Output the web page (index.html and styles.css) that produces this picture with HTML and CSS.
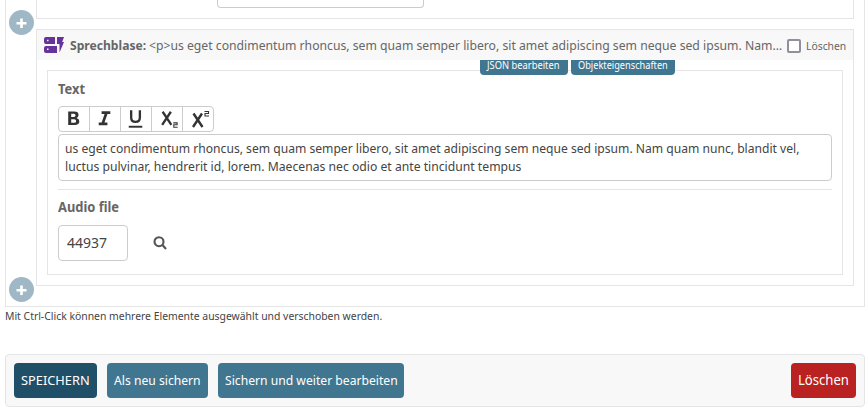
FILE: index.html
```html
<!DOCTYPE html>
<html lang="de">
<head>
<meta charset="utf-8">
<title>Sprechblase bearbeiten</title>
<link rel="stylesheet" href="styles.css">
</head>
<body>
<main class="page">
  <section class="group">
    <div class="item item-previous"><div class="previous-field"></div></div>
    <article class="item">
      <button class="add add-top" aria-label="+"><svg viewBox="0 0 25 25"><path d="M12.5 8.500v9.500M7.500 13.200h10"/></svg></button>
      <header class="item-header">
        <svg class="type-icon" viewBox="0 0 20 16"><path fill-rule="evenodd" d="M2 0H11V7H2Q0 7 0 5V2Q0 0 2 0ZM3 2.800v1.500h1.500v-1.500ZM2 9H13V16H2Q0 16 0 14V11Q0 9 2 9ZM3 11.500v1.500h1.500v-1.500ZM13 0H20L18.200 5H20L15.500 15.500V7H13Z"/></svg>
        <h3 class="item-title"><b class="narrow">Sprechblase:</b><span class="narrow">&lt;p&gt;us eget condimentum rhoncus, sem quam semper libero, sit amet adipiscing sem neque sed ipsum. Nam…</span></h3>
        <label class="remove"><i class="check"></i><span class="narrow">Löschen</span></label>
      </header>
      <nav class="tools"><a class="tool tool-json"><span class="narrow">JSON bearbeiten</span></a><a class="tool tool-object"><span class="narrow">Objekteigenschaften</span></a></nav>
      <div class="fields">
        <h4 class="label"><span class="narrow">Text</span></h4>
        <div class="toolbar">
          <svg viewBox="0 0 31 24"><path class="fill" fill-rule="evenodd" d="M9.500 4.200H15.700Q20.200 4.200 20.200 7.800Q20.200 10.100 18.200 10.900Q21 11.700 21 14.300Q21 18.200 16.200 18.200H9.500ZM12.600 6.500V9.900H15.400Q17.100 9.900 17.100 8.200Q17.100 6.500 15.400 6.500ZM12.600 12.200V15.900H15.600Q17.700 15.900 17.700 14Q17.700 12.200 15.600 12.200Z"/></svg>
          <svg viewBox="0 0 31 24"><path d="M12 5.400h9M9 17h9M17 5.500L13 17" class="thick"/></svg>
          <svg viewBox="0 0 31 24"><path d="M10.500 3v7.500Q10.500 15 15 15T19.500 10.500V3" class="mid"/><path d="M8 20h14"/></svg>
          <svg viewBox="0 0 31 24"><path class="mid" d="M11 4.500L20 18M19.500 4.500L10.500 18"/><path class="thin" d="M22 16h4v2h-3.500v2.500h4"/></svg>
          <svg viewBox="0 0 30 24"><path class="mid" d="M10.500 6.500L19.500 20M19 6.500L10 20"/><path class="thin" d="M21.500 4.500h4v2h-3.500v2.500h4"/></svg>
        </div>
        <div class="editor"><div><span class="narrow">us eget condimentum rhoncus, sem quam semper libero, sit amet adipiscing sem neque sed ipsum. Nam quam nunc, blandit vel,</span></div><div class="last"><span class="narrow">luctus pulvinar, hendrerit id, lorem. Maecenas nec odio et ante tincidunt tempus</span></div></div>
        <div class="audio">
          <h4 class="label"><span class="narrow">Audio file</span></h4>
          <div class="lookup"><div class="number">44937</div><svg viewBox="0 0 14 14"><circle cx="6" cy="5.700" r="4.500"/><path d="M9.500 9l3.500 4"/></svg></div>
        </div>
      </div>
      <button class="add add-bottom" aria-label="+"><svg viewBox="0 0 25 25"><path d="M12.5 8.500v9.500M7.500 13.200h10"/></svg></button>
    </article>
  </section>
  <p class="help"><span class="narrow">Mit Ctrl-Click können mehrere Elemente ausgewählt und verschoben werden.</span></p>
  <footer class="actions">
    <button class="btn save"><span class="narrow">SPEICHERN</span></button>
    <button class="btn copy"><span class="narrow">Als neu sichern</span></button>
    <button class="btn continue"><span class="narrow">Sichern und weiter bearbeiten</span></button>
    <button class="btn delete"><span class="narrow">Löschen</span></button>
  </footer>
</main>
</body>
</html>
```
FILE: styles.css
```css
* { box-sizing: border-box; }
body { margin: 0; background: #fff; color: #444; font: 13px/18px "Noto Sans", sans-serif; overflow: hidden; }
button { border: 0; font: inherit; padding: 0; }
h3, h4, p { margin: 0; }
.narrow { display: inline-block; transform: scaleX(.935); transform-origin: 0 50%; white-space: nowrap; }
.page { padding: 0 3px 0 5px; height: 412px; }
.group { width: 860px; height: 307px; border: 1px solid #e5e5e5; border-top: 0; padding: 0 10px 0 30px; }
.item { position: relative; border: 1px solid #e5e5e5; height: 257px; }
.item-previous { height: 19px; border-top: 0; margin-bottom: 10px; padding-left: 180px; }
.previous-field { width: 207px; height: 8px; border: 1px solid #ccc; border-top: 0; border-radius: 0 0 4px 4px; }
.add { position: absolute; left: -28px; width: 25px; height: 25px; border-radius: 50%; background: #a0b8c6; }
.add svg { display: block; width: 25px; height: 25px; fill: none; stroke: #fff; stroke-width: 2.6; }
.add-top { top: -20px; }
.add-bottom { bottom: -17px; }
.item-header { display: flex; align-items: center; height: 30px; background: #f8f8f8; padding: 0 7px; color: #666; }
.type-icon { flex: none; width: 20px; height: 16px; fill: #639; margin-right: 6px; }
.item-title { display: flex; flex: none; width: 717px; font-size: 13px; font-weight: 400; white-space: nowrap; }
.item-title b { flex: none; width: 79px; }
.item-title .narrow { transform: scaleX(.938); }
.item-title b.narrow { transform: scaleX(.932); }
.remove { display: flex; flex: none; width: 58px; align-items: center; gap: 5px; font-size: 11px; margin-top: 2px; }
.remove .narrow { transform: scaleX(.94); }
.check { flex: none; width: 14px; height: 14px; border: 2px solid #8f8f9d; border-radius: 2px; background: #fff; }
.tools { position: absolute; top: 30px; left: 443px; display: flex; gap: 3px; }
.tool { height: 15px; background: #417690; color: #fff; border-radius: 0 0 4px 4px; font-size: 10px; line-height: 11px; padding-left: 7px; white-space: nowrap; }
.tool-json { width: 88px; }
.tool-object { width: 104px; }
.tool-object .narrow { transform: scaleX(.92); }
.fields { margin: 10px; height: 205px; border: 1px solid #e5e5e5; padding: 9px 10px; }
.label { height: 18px; font-size: 14px; line-height: 18px; font-weight: 700; color: #666; }
.label .narrow { transform: scaleX(.92); }
.toolbar { display: flex; width: 156px; height: 26px; margin-top: 8px; border: 1px solid #ccc; border-radius: 4px; }
.toolbar svg { flex: none; width: 31px; height: 24px; border-right: 1px solid #ccc; fill: none; stroke: #333; stroke-width: 2; }
.toolbar svg:last-child { width: 30px; border: 0; }
.toolbar .fill { fill: #333; stroke: none; }
.toolbar .thick { stroke-width: 2.800; }
.toolbar .mid { stroke-width: 2.400; }
.toolbar .thin { stroke-width: 1.100; }
.editor { height: 47px; margin-top: 2px; border: 1px solid #ccc; border-radius: 4px; padding: 4px 6px; white-space: nowrap; }
.editor > div { height: 18px; }
.editor .narrow { transform: scaleX(.932); }
.editor .last .narrow { transform: scaleX(.937); }
.audio { margin-top: 8px; border-top: 1px solid #e5e5e5; padding-top: 8px; }
.lookup { display: flex; align-items: center; gap: 25px; margin-top: 9px; }
.number { width: 70px; height: 36px; border: 1px solid #ccc; border-radius: 4px; padding: 8px; font-size: 14px; }
.lookup svg { width: 14px; height: 14px; fill: none; stroke: #555; stroke-width: 2.100; }
.help { height: 47px; font-size: 11px; line-height: 18px; white-space: nowrap; }
.help .narrow { transform: scaleX(.945); }
.actions { display: flex; gap: 10px; width: 860px; height: 53px; border: 1px solid #e5e5e5; border-radius: 4px; background: #f8f8f8; padding: 8px; }
.btn { height: 35px; border-radius: 4px; background: #417690; color: #fff; text-align: left; padding: 0 0 1px 7px; white-space: nowrap; }
.save { width: 83px; background: #205067; }
.save .narrow { transform: scaleX(.985); }
.copy { width: 101px; }
.continue { width: 186px; }
.delete { width: 65px; margin-left: auto; background: #ba2121; font-size: 14px; }
```
